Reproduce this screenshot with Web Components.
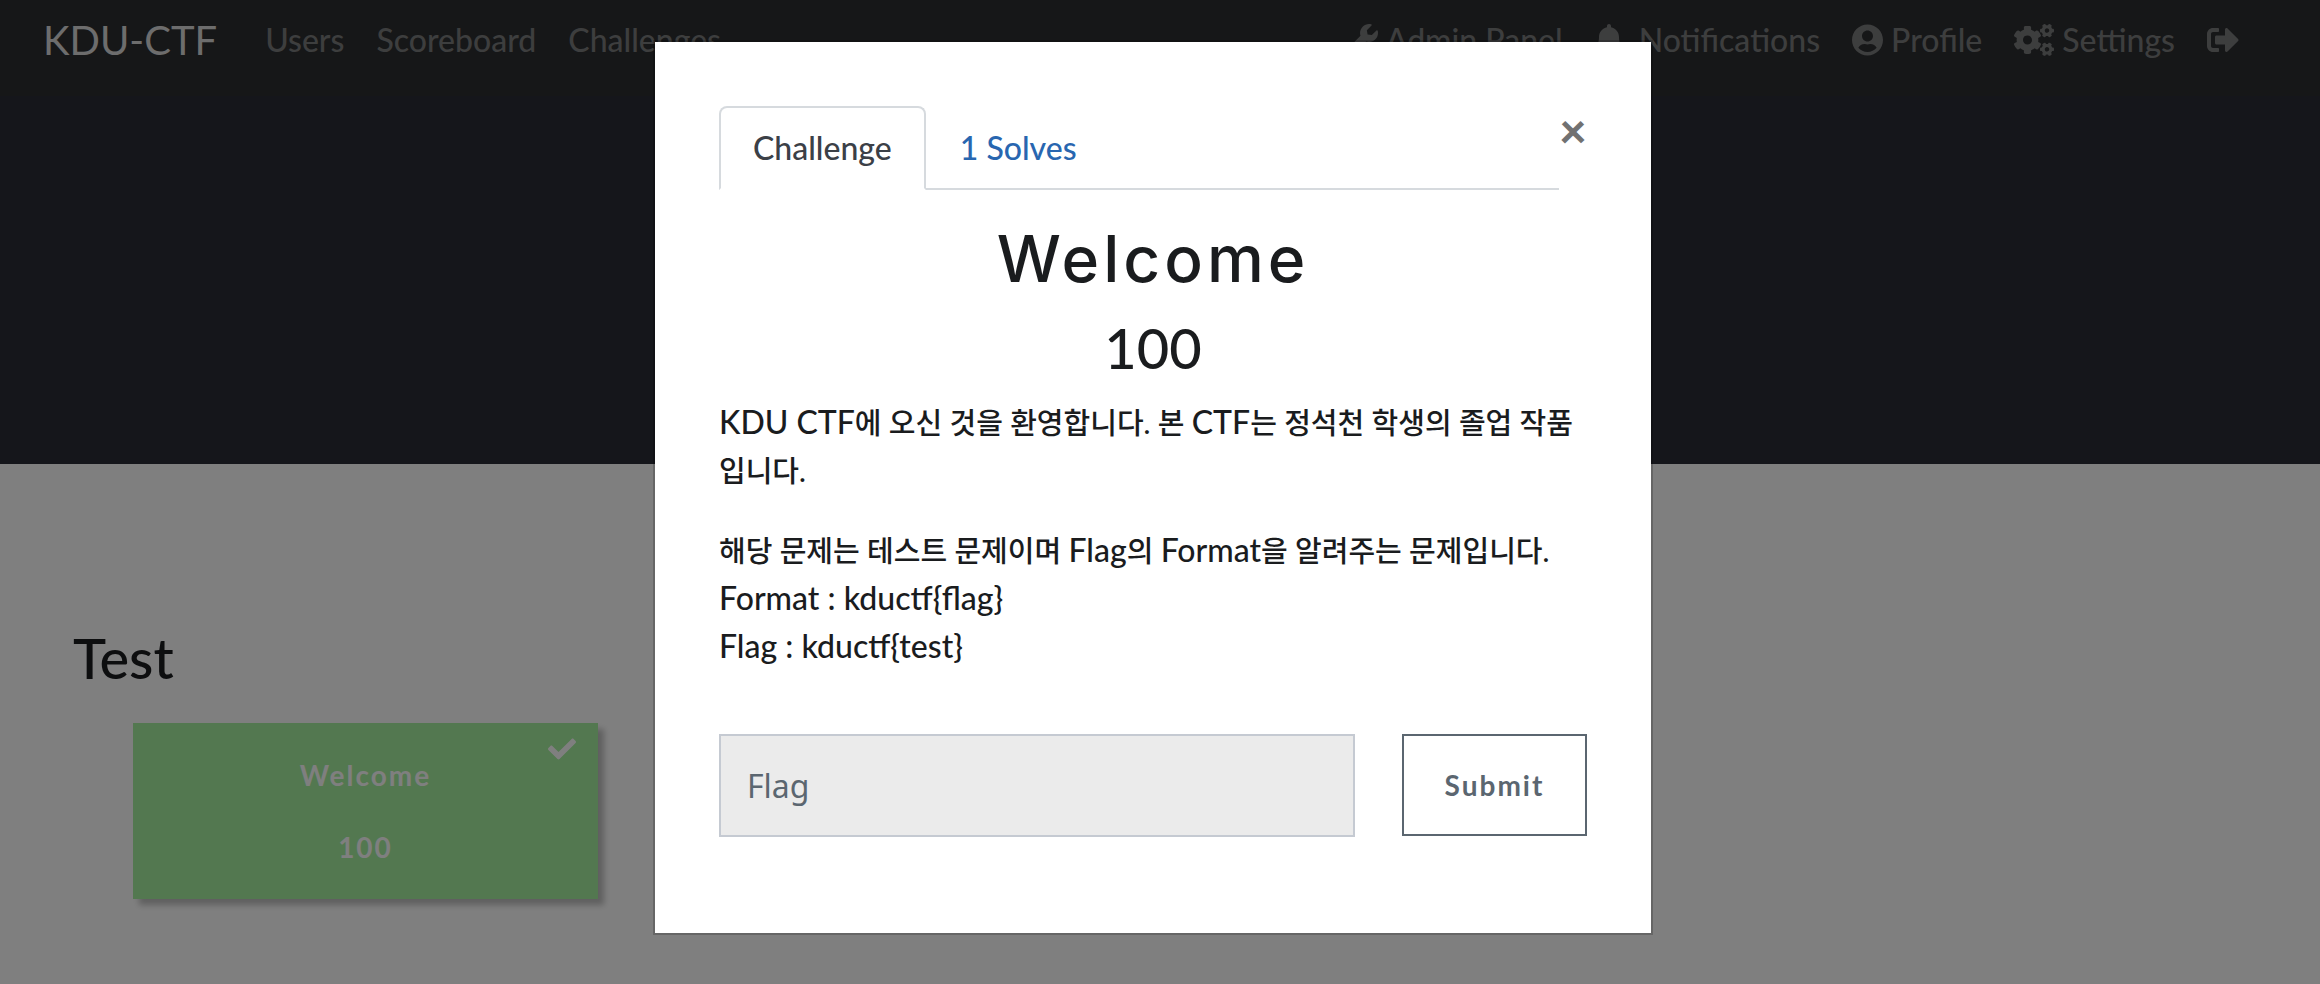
<!DOCTYPE html>
<html lang="ko">
<head>
<meta charset="utf-8">
<title>KDU-CTF</title>
<style>
  html, body { margin: 0; min-height: 100%; }
  body {
    font: 500 32px/48px Lato, "Noto Sans CJK KR", sans-serif;
    color: #1a1c1e;
    background: #fff;
    overflow: hidden;
  }
</style>
</head>
<body>
<ctf-page></ctf-page>

<script>
const define = (name, html) => {
  const template = document.createElement('template');
  template.innerHTML = html;
  customElements.define(name, class extends HTMLElement {
    constructor() {
      super();
      this.attachShadow({ mode: 'open' }).append(template.content.cloneNode(true));
    }
  });
};

/* Solid icons, filled with the current text colour. */
const icons = {
  wrench: ['512 512', 'M507.73 109.1c-2.24-9.03-13.54-12.09-20.12-5.51l-74.36 74.36-67.88-11.31-11.31-67.88 74.36-74.36c6.62-6.62 3.43-17.9-5.66-20.16-47.38-11.74-99.55.91-136.58 37.93-39.64 39.64-50.55 97.1-34.05 147.2L18.74 402.76c-24.99 24.99-24.99 65.51 0 90.5 24.99 24.99 65.51 24.99 90.5 0l213.21-213.21c50.12 16.71 107.47 5.68 147.37-34.22 37.07-37.07 49.7-89.32 37.91-136.73zM64 472c-13.25 0-24-10.75-24-24 0-13.26 10.75-24 24-24s24 10.74 24 24c0 13.25-10.75 24-24 24z'],
  bell: ['448 512', 'M224 512c35.32 0 63.97-28.65 63.97-64H160.03c0 35.35 28.65 64 63.97 64zm215.39-149.71c-19.32-20.76-55.47-51.99-55.47-154.29 0-77.7-54.48-139.9-127.94-155.16V32c0-17.67-14.32-32-31.98-32s-31.98 14.33-31.98 32v20.84C118.56 68.1 64.08 130.3 64.08 208c0 102.3-36.15 133.53-55.47 154.29-6 6.45-8.66 14.16-8.61 21.71.11 16.4 12.98 32 32.1 32h383.8c19.12 0 32-15.6 32.1-32 .05-7.55-2.61-15.27-8.61-21.71z'],
  user: ['496 512', 'M248 8C111 8 0 119 0 256s111 248 248 248 248-111 248-248S385 8 248 8zm0 96c48.6 0 88 39.4 88 88s-39.4 88-88 88-88-39.4-88-88 39.4-88 88-88zm0 344c-58.7 0-111.3-26.6-146.5-68.2 18.8-35.4 55.6-59.8 98.5-59.8 2.4 0 4.8.4 7.1 1.1 13 4.2 26.6 6.9 40.9 6.9 14.3 0 28-2.7 40.9-6.9 2.3-.7 4.7-1.1 7.1-1.1 42.9 0 79.7 24.4 98.5 59.8C359.3 421.4 306.7 448 248 448z'],
  cogs: ['640 512', 'M512.1 191l-8.2 14.3c-3 5.3-9.4 7.5-15.1 5.4-11.8-4.4-22.6-10.7-32.1-18.6-4.6-3.8-5.8-10.5-2.8-15.7l8.2-14.3c-6.9-8-12.3-17.3-15.9-27.4h-16.5c-6 0-11.2-4.3-12.2-10.3-2-12-2.1-24.6 0-37.1 1-6 6.200-10.4 12.2-10.4h16.500c3.600-10.100 9-19.400 15.900-27.400l-8.200-14.300c-3-5.200-1.900-11.900 2.800-15.700 9.500-7.900 20.400-14.200 32.100-18.600 5.700-2.100 12.100.100 15.100 5.400l8.200 14.300c10.500-1.900 21.200-1.900 31.700 0L552 6.300c3-5.300 9.400-7.500 15.100-5.400 11.800 4.400 22.600 10.700 32.100 18.600 4.600 3.800 5.800 10.500 2.800 15.700l-8.200 14.300c6.900 8 12.300 17.300 15.900 27.400h16.500c6 0 11.200 4.300 12.200 10.300 2 12 2.100 24.600 0 37.100-1 6-6.200 10.400-12.200 10.400h-16.500c-3.600 10.100-9 19.400-15.900 27.400l8.200 14.300c3 5.200 1.900 11.900-2.800 15.700-9.500 7.900-20.400 14.200-32.100 18.600-5.700 2.100-12.100-.1-15.100-5.400l-8.200-14.300c-10.400 1.900-21.200 1.900-31.700 0zm-10.500-58.800c38.500 29.600 82.400-14.300 52.800-52.800-38.500-29.700-82.400 14.300-52.800 52.800zM386.300 286.100l33.700 16.800c10.100 5.800 14.500 18.100 10.500 29.100-8.900 24.200-26.400 46.400-42.600 65.800-7.400 8.900-20.200 11.100-30.300 5.300l-29.100-16.800c-16 13.700-34.600 24.600-54.900 31.700v33.600c0 11.600-8.300 21.600-19.700 23.600-24.600 4.200-50.400 4.400-75.900 0-11.500-2-20-11.900-20-23.600V418c-20.300-7.200-38.900-18-54.900-31.700L74 403c-10 5.800-22.900 3.600-30.300-5.300-16.200-19.400-33.300-41.600-42.200-65.700-4-10.900.4-23.200 10.500-29.100l33.300-16.800c-3.900-20.900-3.900-42.400 0-63.400L12 205.800c-10.100-5.800-14.600-18.100-10.500-29 8.900-24.200 26-46.400 42.200-65.800 7.400-8.900 20.200-11.100 30.300-5.300l29.100 16.800c16-13.700 34.600-24.600 54.900-31.700V57.100c0-11.500 8.200-21.500 19.600-23.500 24.600-4.200 50.500-4.400 76-.1 11.500 2 20 11.900 20 23.600v33.600c20.300 7.200 38.900 18 54.900 31.700l29.100-16.800c10-5.800 22.900-3.600 30.300 5.300 16.200 19.400 33.200 41.600 42.100 65.800 4 10.900.1 23.200-10 29.100l-33.700 16.800c3.900 21 3.900 42.500 0 63.500zm-117.600 21.100c59.200-77-28.700-164.900-105.700-105.700-59.200 77 28.700 164.900 105.700 105.700zm243.400 182.700l-8.200 14.300c-3 5.300-9.400 7.500-15.100 5.400-11.800-4.400-22.600-10.700-32.100-18.600-4.600-3.800-5.800-10.500-2.800-15.700l8.200-14.300c-6.900-8-12.300-17.300-15.900-27.400h-16.500c-6 0-11.200-4.300-12.200-10.300-2-12-2.100-24.600 0-37.100 1-6 6.200-10.400 12.200-10.400h16.500c3.600-10.100 9-19.400 15.900-27.400l-8.200-14.300c-3-5.200-1.900-11.900 2.800-15.700 9.500-7.900 20.400-14.200 32.100-18.600 5.700-2.100 12.100.1 15.100 5.400l8.200 14.300c10.500-1.900 21.200-1.900 31.700 0l8.200-14.300c3-5.300 9.400-7.500 15.100-5.400 11.800 4.400 22.600 10.700 32.100 18.600 4.600 3.800 5.800 10.500 2.800 15.700l-8.200 14.300c6.900 8 12.300 17.300 15.900 27.400h16.500c6 0 11.200 4.300 12.200 10.300 2 12 2.100 24.600 0 37.100-1 6-6.200 10.400-12.200 10.400h-16.500c-3.600 10.100-9 19.400-15.900 27.400l8.200 14.300c3 5.200 1.900 11.900-2.800 15.700-9.500 7.900-20.400 14.200-32.100 18.600-5.700 2.100-12.100-.1-15.100-5.400l-8.200-14.300c-10.400 1.900-21.200 1.900-31.700 0zM501.600 431c38.500 29.600 82.400-14.300 52.800-52.800-38.500-29.600-82.400 14.300-52.800 52.800z'],
  logout: ['512 512', 'M497 273L329 441c-15 15-41 4.500-41-17v-96H152c-13.300 0-24-10.700-24-24v-96c0-13.300 10.700-24 24-24h136V88c0-21.400 25.900-32 41-17l168 168c9.300 9.400 9.300 24.600 0 34zM192 436v-40c0-6.600-5.400-12-12-12H96c-17.700 0-32-14.300-32-32V160c0-17.700 14.300-32 32-32h84c6.600 0 12-5.400 12-12V76c0-6.600-5.400-12-12-12H96c-53 0-96 43-96 96v192c0 53 43 96 96 96h84c6.600 0 12-5.400 12-12z'],
  check: ['512 512', 'M173.898 439.404l-166.400-166.400c-9.997-9.997-9.997-26.206 0-36.204l36.203-36.204c9.997-9.998 26.207-9.998 36.204 0L192 312.690 432.095 72.596c9.997-9.997 26.207-9.997 36.204 0l36.203 36.204c9.997 9.997 9.997 26.206 0 36.204l-294.400 294.401c-9.998 9.997-26.207 9.997-36.204-.001z']
};
customElements.define('ctf-icon', class extends HTMLElement {
  constructor() {
    super();
    this.attachShadow({ mode: 'open' });
  }
  connectedCallback() {
    const [size, path] = icons[this.getAttribute('name')];
    this.shadowRoot.innerHTML = `
      <style>
        :host { display: inline-flex; }
        svg { display: block; height: 1em; fill: currentColor; }
      </style>
      <svg viewBox="0 0 ${size}" style="aspect-ratio: ${size.replace(' ', '/')}" aria-hidden="true"><path d="${path}"/></svg>`;
  }
});

define('nav-link', `
  <style>
    :host { display: block; }
    a { display: flex; align-items: center; gap: 8px; min-height: 48px; padding: 16px; color: #7b7c7d; text-decoration: none; white-space: nowrap; }
  </style>
  <a href="#"><slot></slot></a>`);

define('ctf-navbar', `
  <style>
    :host { display: block; background: #2c2e30; }
    nav { display: flex; align-items: center; padding: 0 65px 16px 43px; }
    .brand { margin-right: 32px; font-weight: 400; font-size: 40px; line-height: 60px; color: #dadada; text-decoration: none; white-space: nowrap; }
    .group { display: flex; }
    .account { margin-left: auto; }
  </style>
  <nav>
    <a class="brand" href="#">KDU-CTF</a>
    <div class="group">
      <nav-link>Users</nav-link>
      <nav-link>Scoreboard</nav-link>
      <nav-link>Challenges</nav-link>
    </div>
    <div class="group account">
      <nav-link><ctf-icon name="wrench"></ctf-icon>Admin Panel</nav-link>
      <nav-link><ctf-icon name="bell" style="margin-right: 8px"></ctf-icon>Notifications</nav-link>
      <nav-link><ctf-icon name="user"></ctf-icon>Profile</nav-link>
      <nav-link><ctf-icon name="cogs"></ctf-icon>Settings</nav-link>
      <nav-link><ctf-icon name="logout"></ctf-icon></nav-link>
    </div>
  </nav>`);

define('challenge-card', `
  <style>
    :host { display: block; }
    button {
      position: relative; display: block; width: 100%; padding: 32px 16px; border: 0;
      background: #a6f0a0; color: #fff; box-shadow: 6px 6px 6px rgba(0, 0, 0, .25);
      font: 700 28px/40px Lato, sans-serif; letter-spacing: 2px; text-align: center;
    }
    ctf-icon { position: absolute; top: 12px; right: 22px; }
    span { display: block; }
    .name { margin-bottom: 32px; }
  </style>
  <button type="button">
    <ctf-icon name="check"></ctf-icon>
    <span class="name"><slot></slot></span>
    <span><slot name="value"></slot></span>
  </button>`);

define('challenge-board', `
  <style>
    :host { display: block; padding: 160px 87px 0 73px; }
    h3 { margin: 0; font-weight: 500; font-size: 56px; line-height: 68px; }
    .grid { display: grid; grid-template-columns: repeat(4, 1fr); gap: 80px; margin: 31px 0 0 60px; }
  </style>
  <h3>Test</h3>
  <div class="grid">
    <challenge-card>Welcome<span slot="value">100</span></challenge-card>
  </div>`);

define('challenge-dialog', `
  <style>
    :host { display: block; width: 1000px; max-width: 100%; }
    * { box-sizing: border-box; }
    .box { padding: 64px; background: #fff; background-clip: padding-box; border: 2px solid rgba(0, 0, 0, .2); }
    header { display: flex; align-items: flex-start; }
    .tabs { flex: 1; display: flex; border-bottom: 2px solid #d6dade; }
    .tabs a { margin-bottom: -2px; padding: 16px 32px; border: 2px solid transparent; color: #2866b0; text-decoration: none; }
    .tabs .active { color: #3b4047; border-color: #d6dade #d6dade #fff; border-radius: 8px 8px 0 0; background: #fff; }
    .close { padding: 0; border: 0; background: none; width: 28px; color: #717171; font: 900 48px/48px Lato, sans-serif; text-align: center; }
    h2, h3 { margin: 0 0 16px; font-weight: 500; text-align: center; }
    h2 { margin-top: 30px; font-family: Inter, sans-serif; font-size: 64px; line-height: 78px; letter-spacing: 4px; }
    h3 { font-size: 56px; line-height: 68px; }
    p { margin: 0 0 32px; }
    [lang=ko] { font-size: 29px; line-height: 1; }
    form { display: flex; align-items: flex-start; gap: 47px; margin: 64px 0 32px; }
    input, form button { border-radius: 0; }
    input { flex: 1; min-width: 0; height: 103px; padding: 0 26px; border: 2px solid #c5cad2; background: #ebebeb; color: #5b6670; font: 400 32px/48px "Noto Sans", sans-serif; }
    input::placeholder { color: #5b6670; opacity: 1; }
    form button { width: 185px; height: 102px; border: 2px solid #5b6670; background: #fff; color: #5b6670; font: 700 28px/40px Lato, sans-serif; letter-spacing: 2px; }
  </style>
  <div class="box" role="dialog" aria-label="Welcome">
    <header>
      <div class="tabs">
        <a class="active" href="#challenge">Challenge</a>
        <a href="#solves">1 Solves</a>
      </div>
      <button class="close" type="button" aria-label="Close">×</button>
    </header>
    <h2>Welcome</h2>
    <h3>100</h3>
    <p>KDU CTF<span lang="ko">에 오신 것을 환영합니다. 본 </span>CTF<span lang="ko">는 정석천 학생의 졸업 작품</span><span lang="ko">입니다.</span></p>
    <p><span lang="ko">해당 문제는 테스트 문제이며 </span>Flag<span lang="ko">의 </span>Format<span lang="ko">을 알려주는 문제입니다.</span><br>
    Format : kductf{flag}<br>
    Flag : kductf{test}</p>
    <form>
      <input type="text" placeholder="Flag" aria-label="Flag">
      <button type="button">Submit</button>
    </form>
  </div>`);

define('ctf-page', `
  <style>
    :host { display: block; min-height: 100vh; }
    .hero { height: 368px; background: #2a2c36; }
    .backdrop { position: fixed; inset: 0; background: rgba(0, 0, 0, .5); }
    .modal { position: fixed; inset: 0; display: flex; justify-content: center; align-items: flex-start; padding: 40px 14px 0 0; }
  </style>
  <ctf-navbar></ctf-navbar>
  <div class="hero"></div>
  <challenge-board></challenge-board>
  <div class="backdrop"></div>
  <div class="modal"><challenge-dialog></challenge-dialog></div>`);
</script>
</body>
</html>
